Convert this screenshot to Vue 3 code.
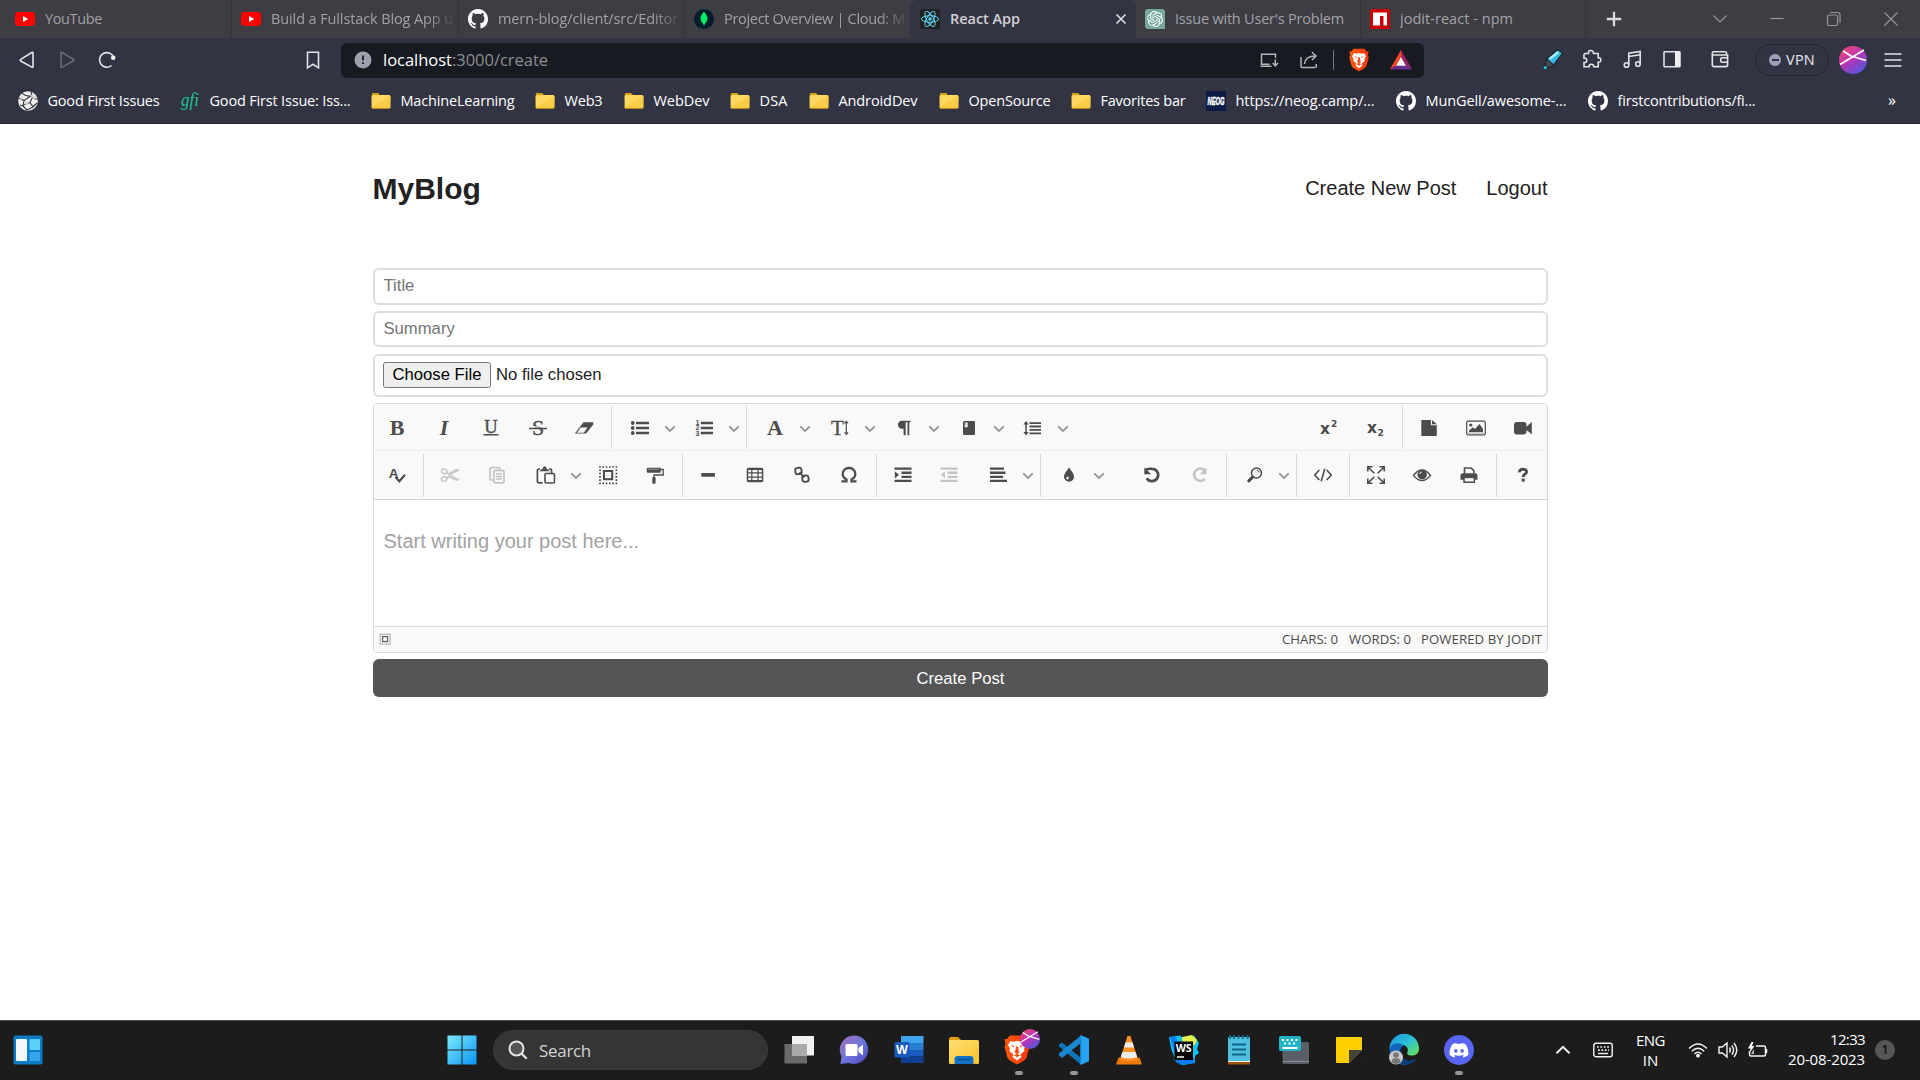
<script setup>
// Spreads a label's letters so that it fills the given width in pixels.
const vFit = {
  mounted(el, { value }) {
    if (!value) return
    const count = el.textContent.length
    const spacing = (value - el.getBoundingClientRect().width) / count
    el.style.letterSpacing = spacing.toFixed(3) + 'px'
  }
}

const githubPath = 'M8 0C3.58 0 0 3.58 0 8c0 3.54 2.29 6.53 5.47 7.59.4.07.55-.17.55-.38 0-.19-.01-.82-.01-1.49-2.01.37-2.53-.49-2.69-.94-.09-.23-.48-.94-.82-1.13-.28-.15-.68-.52-.01-.53.63-.01 1.08.58 1.23.82.72 1.21 1.87.87 2.33.66.07-.52.28-.87.51-1.07-1.78-.2-3.64-.89-3.64-3.95 0-.87.31-1.59.82-2.15-.08-.2-.36-1.02.08-2.12 0 0 .67-.21 2.2.82.64-.18 1.32-.27 2-.27s1.36.09 2 .27c1.53-1.04 2.2-.82 2.2-.82.44 1.1.16 1.92.08 2.12.51.56.82 1.27.82 2.15 0 3.07-1.87 3.75-3.65 3.95.29.25.54.73.54 1.48 0 1.07-.01 1.93-.01 2.2 0 .21.15.46.55.38A8.01 8.01 0 0 0 16 8c0-4.42-3.58-8-8-8Z'
const openaiPath = 'M22.2819 9.8211a5.9847 5.9847 0 0 0-.5157-4.9108 6.0462 6.0462 0 0 0-6.5098-2.9A6.0651 6.0651 0 0 0 4.9807 4.1818a5.9847 5.9847 0 0 0-3.9977 2.9 6.0462 6.0462 0 0 0 .7427 7.0966 5.98 5.98 0 0 0 .511 4.9107 6.051 6.051 0 0 0 6.5146 2.9001A5.9847 5.9847 0 0 0 13.2599 24a6.0557 6.0557 0 0 0 5.7718-4.2058 5.9894 5.9894 0 0 0 3.9977-2.9001 6.0557 6.0557 0 0 0-.7475-7.0729zm-9.022 12.6081a4.4755 4.4755 0 0 1-2.8764-1.0408l.1419-.0804 4.7783-2.7582a.7948.7948 0 0 0 .3927-.6813v-6.7369l2.02 1.1686a.071.071 0 0 1 .038.052v5.5826a4.504 4.504 0 0 1-4.4945 4.4944zm-9.6607-4.1254a4.4708 4.4708 0 0 1-.5346-3.0137l.142.0852 4.783 2.7582a.7712.7712 0 0 0 .7806 0l5.8428-3.3685v2.3324a.0804.0804 0 0 1-.0332.0615L9.74 19.9502a4.4992 4.4992 0 0 1-6.1408-1.6464zM2.3408 7.8956a4.485 4.485 0 0 1 2.3655-1.9728V11.6a.7664.7664 0 0 0 .3879.6765l5.8144 3.3543-2.0201 1.1685a.0757.0757 0 0 1-.071 0l-4.8303-2.7865A4.504 4.504 0 0 1 2.3408 7.872zm16.5963 3.8558L13.1038 8.364 15.1192 7.2a.0757.0757 0 0 1 .071 0l4.8303 2.7913a4.4944 4.4944 0 0 1-.6765 8.1042v-5.6772a.79.79 0 0 0-.407-.667zm2.0107-3.0231l-.142-.0852-4.7735-2.7818a.7759.7759 0 0 0-.7854 0L9.409 9.2297V6.8974a.0662.0662 0 0 1 .0284-.0615l4.8303-2.7866a4.4992 4.4992 0 0 1 6.6802 4.66zM8.3065 12.863l-2.02-1.1638a.0804.0804 0 0 1-.038-.0567V6.0742a4.4992 4.4992 0 0 1 7.3757-3.4537l-.142.0805L8.704 5.459a.7948.7948 0 0 0-.3927.6813zm1.0976-2.3654l2.602-1.4998 2.6069 1.4998v2.9994l-2.5974 1.4997-2.6067-1.4997Z'
const discordPath = 'M20.317 4.3698a19.7913 19.7913 0 00-4.8851-1.5152.0741.0741 0 00-.0785.0371c-.211.3753-.4447.8648-.6083 1.2495-1.8447-.2762-3.68-.2762-5.4868 0-.1636-.3933-.4058-.8742-.6177-1.2495a.077.077 0 00-.0785-.037 19.7363 19.7363 0 00-4.8852 1.515.0699.0699 0 00-.0321.0277C.5334 9.0458-.319 13.5799.0992 18.0578a.0824.0824 0 00.0312.0561c2.0528 1.5076 4.0413 2.4228 5.9929 3.0294a.0777.0777 0 00.0842-.0276c.4616-.6304.8731-1.2952 1.226-1.9942a.076.076 0 00-.0416-.1057c-.6528-.2476-1.2743-.5495-1.8722-.8923a.077.077 0 01-.0076-.1277c.1258-.0943.2517-.1923.3718-.2914a.0743.0743 0 01.0776-.0105c3.9278 1.7933 8.18 1.7933 12.0614 0a.0739.0739 0 01.0785.0095c.1202.099.246.1981.3728.2924a.077.077 0 01-.0066.1276 12.2986 12.2986 0 01-1.873.8914.0766.0766 0 00-.0407.1067c.3604.698.7719 1.3628 1.225 1.9932a.076.076 0 00.0842.0286c1.961-.6067 3.9495-1.5219 6.0023-3.0294a.077.077 0 00.0313-.0552c.5004-5.177-.8382-9.6739-3.5485-13.6604a.061.061 0 00-.0312-.0286zM8.02 15.3312c-1.1825 0-2.1569-1.0857-2.1569-2.419 0-1.3332.9555-2.4189 2.157-2.4189 1.2108 0 2.1757 1.0952 2.1568 2.419 0 1.3332-.9555 2.4189-2.1569 2.4189zm7.9748 0c-1.1825 0-2.1569-1.0857-2.1569-2.419 0-1.3332.9554-2.4189 2.1569-2.4189 1.2108 0 2.1757 1.0952 2.1568 2.419 0 1.3332-.946 2.4189-2.1568 2.4189Z'

// 20 x 20 site icons for tabs and bookmarks
const site = {
  youtube: '<rect x="0" y="3" width="20" height="14" rx="3.4" fill="#f00"/><path d="M8 7l5.2 3L8 13z" fill="#fff"/>',
  github: `<path transform="scale(1.25)" d="${githubPath}" fill="#fff"/>`,
  mongo: '<circle cx="10" cy="10" r="10" fill="#001e2b"/><path d="M10 2.6c.4 1 3.4 3.2 3.4 7 0 3-1.800 4.600-2.900 5.500l-.2 2h-.6l-.2-2c-1.100-.9-2.900-2.500-2.900-5.500 0-3.800 3-6 3.400-7z" fill="#00ed64"/>',
  react: '<rect width="20" height="20" rx="2" fill="#212121"/><g fill="none" stroke="#61dafb" stroke-width=".95"><ellipse cx="10" cy="10" rx="8.600" ry="3.300"/><ellipse cx="10" cy="10" rx="8.600" ry="3.300" transform="rotate(60 10 10)"/><ellipse cx="10" cy="10" rx="8.600" ry="3.300" transform="rotate(120 10 10)"/></g><circle cx="10" cy="10" r="1.700" fill="#61dafb"/>',
  openai: `<path d="M3 0h14a3 3 0 0 1 3 3v17H3a3 3 0 0 1-3-3V3a3 3 0 0 1 3-3z" fill="#75a99c"/><g transform="translate(2 2) scale(.667)"><path d="${openaiPath}" fill="#fff"/></g>`,
  npm: '<rect width="20" height="20" fill="#c00"/><path d="M3 3.500h14v13h-3.500V7H10v9.500H3z" fill="#fff"/>',
  ball: '<circle cx="10" cy="10" r="9.800" fill="#f2f2f2"/><g fill="none" stroke="#3b3b3b" stroke-width="1.200"><path d="M4 2.500c3 2 6 3 9 2.500M1 7l5 2.500 6-4M6 9.500L5 15l-3-1M5 15l4 4M5.500 14l6.500-2.500 2.500-5 4.500 2M12 11.500l3.500 5M9 19l6-3 4-4M13 .8l1.500 5.500"/></g><path d="M13 4l2 4 4-1-3-4zM3 4l3 2-4 4zM6 11l4-1 1 2-4 2z" fill="#d9d9d9"/>',
  gfi: '<text x="10" y="14.500" text-anchor="middle" textLength="18" lengthAdjust="spacingAndGlyphs" font-family="Liberation Serif, serif" font-style="italic" font-size="18.500" fill="#22c197">gfi</text>',
  folder: '<path d="M.8 3.500q0-1.400 1.300-1.400h5l2 2.200h9q1.300 0 1.300 1.400v4H.8z" fill="#dfa00e"/><rect x=".6" y="4" width="18.800" height="13.600" rx="1.500" fill="#ffd95f"/><path d="M19.400 5v11.100q0 1.500-1.500 1.500H2.100q-1.500 0-1.500-1.500z" fill="#f9c73f" opacity=".75"/><path d="M.9 17.400h18" stroke="#b98a1b" stroke-width="1"/>',
  neog: '<rect width="20" height="20" fill="#0b1c44"/><text x="10" y="13.600" text-anchor="middle" textLength="17" lengthAdjust="spacingAndGlyphs" font-family="Liberation Sans, sans-serif" font-weight="bold" font-style="italic" font-size="10" fill="#fff" stroke="#fff" stroke-width=".5">NEOG</text>'
}

const tabs = [
  { icon: 'youtube', text: 'YouTube', fit: 57, w: 232, pad: 15 },
  { icon: 'youtube', text: 'Build a Fullstack Blog App u', fit: 182, w: 227, pad: 9, fade: true },
  { icon: 'github', text: 'mern-blog/client/src/Editor', fit: 180, w: 226, pad: 9, fade: true },
  { icon: 'mongo', text: 'Project Overview | Cloud: M', fit: 181, w: 225, pad: 9, fade: true },
  { icon: 'react', text: 'React App', fit: 70, w: 226, pad: 10, active: true },
  { icon: 'openai', text: "Issue with User's Problem", fit: 169, w: 225, pad: 9 },
  { icon: 'npm', text: 'jodit-react - npm', fit: 113, w: 225, pad: 9 }
]

const bookmarks = [
  { icon: 'ball', text: 'Good First Issues', fit: 112, w: 162 },
  { icon: 'gfi', text: 'Good First Issue: Iss...', fit: 141, w: 191 },
  { icon: 'folder', text: 'MachineLearning', fit: 114, w: 164 },
  { icon: 'folder', text: 'Web3', fit: 38, w: 89 },
  { icon: 'folder', text: 'WebDev', fit: 56, w: 106 },
  { icon: 'folder', text: 'DSA', fit: 28, w: 79 },
  { icon: 'folder', text: 'AndroidDev', fit: 79, w: 130 },
  { icon: 'folder', text: 'OpenSource', fit: 82, w: 132 },
  { icon: 'folder', text: 'Favorites bar', fit: 85, w: 135 },
  { icon: 'neog', text: 'https://neog.camp/...', fit: 139, w: 190 },
  { icon: 'github', text: 'MunGell/awesome-...', fit: 141, w: 192 },
  { icon: 'github', text: 'firstcontributions/fi...', fit: 138, w: 170 }
]

const serif = 'text-anchor="middle" font-family="Liberation Serif, serif" fill="currentColor"'
// 20 x 20 editor toolbar icons
const ed = {
  bold: `<text x="10" y="17.200" font-size="22" font-weight="bold" ${serif}>B</text>`,
  italic: `<text x="10" y="17.200" font-size="22" font-weight="bold" font-style="italic" ${serif}>I</text>`,
  underline: `<text x="10" y="14.600" font-size="18.500" stroke="currentColor" stroke-width=".4" ${serif}>U</text><path d="M2.500 16.700h15" stroke="currentColor" stroke-width="1.400"/>`,
  strike: `<text x="10" y="17.200" font-size="22" stroke="currentColor" stroke-width=".4" ${serif}>S</text><path d="M1 8.800h18" stroke="#f9f9f9" stroke-width="1.200"/><path d="M1 10.400h18" stroke="currentColor" stroke-width="1.500"/>`,
  eraser: '<path d="M.8 15.500L9.500 4.200h9.700v2.300l-7 9H.8z" fill="currentColor"/><path d="M2.800 14.800L6.800 9.500h6.700l-3.700 5.300z" fill="#f9f9f9"/>',
  ul: '<g fill="currentColor"><circle cx="2.700" cy="5" r="1.900"/><circle cx="2.700" cy="10" r="1.900"/><circle cx="2.700" cy="15" r="1.900"/><path d="M6 3.800h13v2.500H6zM6 8.800h13v2.500H6zM6 13.800h13v2.500H6z"/></g>',
  ol: '<path fill="currentColor" d="M6.800 3.800H19v2.500H6.800zM6.800 8.800H19v2.500H6.800zM6.800 13.800H19v2.500H6.800z"/><g font-family="Liberation Sans, sans-serif" font-weight="bold" font-size="7" fill="currentColor"><text x="1.500" y="6.500">1</text><text x="1.500" y="12.300">2</text><text x="1.500" y="18.300">3</text></g>',
  font: `<text x="10" y="17.200" font-size="22" font-weight="bold" ${serif}>A</text>`,
  size: `<text x="7.500" y="17" font-size="21" stroke="currentColor" stroke-width=".3" ${serif}>T</text><path d="M16.300 4v11M14.500 5.300l1.800-2 1.800 2M14.500 14.300l1.800 2 1.800-2" fill="none" stroke="currentColor" stroke-width="1.200"/>`,
  para: '<path fill="currentColor" d="M7.800 2.800h8.700v1.500h-1.200v12.900h-1.800V4.300h-1.800v12.900H9.600v-6.400H8.200C5.600 10.800 4 9 4 6.800s1.600-4 3.800-4z"/>',
  book: '<path fill="currentColor" d="M6 3h9a1 1 0 0 1 1 1v12a1 1 0 0 1-1 1H5.500A1.500 1.500 0 0 1 4 15.500V4.500C4 3.500 5 3 6 3z"/><path d="M5.700 4.600h3v4.600h-3z" fill="#eee"/><path d="M6.200 6h1" stroke="currentColor" stroke-width=".8"/>',
  line: '<path fill="currentColor" d="M6.500 4.200H18v1.800H6.500zM6.500 7.600H18v1.800H6.500zM6.500 11H18v1.800H6.500zM6.500 14.400H18v1.800H6.500zM2.300 5.500h1.500v9.500H2.300zM3 3l2.700 3.400H.4zM3 17.400L.4 14h5.300z"/>',
  sup: '<text x="1" y="15.800" font-family="DejaVu Sans, sans-serif" font-size="15" font-weight="bold" fill="currentColor" textLength="10" lengthAdjust="spacingAndGlyphs">x</text><text x="12" y="9" font-family="DejaVu Sans, sans-serif" font-size="9" font-weight="bold" fill="currentColor">2</text>',
  sub: '<text x="1" y="15" font-family="DejaVu Sans, sans-serif" font-size="15" font-weight="bold" fill="currentColor" textLength="10" lengthAdjust="spacingAndGlyphs">x</text><text x="11.500" y="17.800" font-family="DejaVu Sans, sans-serif" font-size="9" font-weight="bold" fill="currentColor">2</text>',
  file: '<path fill="currentColor" d="M2.300 2h9.600v5.300h5.900V18H2.300zM13 2l4.800 4.200H13z"/>',
  image: '<rect x=".7" y="3.200" width="18.600" height="13.600" rx="1.300" fill="#f9f9f9" stroke="currentColor" stroke-width="1.200"/><circle cx="4.800" cy="7" r="1.600" fill="currentColor"/><path fill="currentColor" d="M3 14v-1.500l4-3.200 2 1.800 4.500-5 3.500 5V14z"/><path d="M2 15h16" stroke="#aaa"/>',
  video: '<rect x="1" y="4" width="12.500" height="12.400" rx="3" fill="currentColor"/><path fill="currentColor" d="M12.500 9.500L18.800 4v12.200l-6.300-5z"/>',
  spell: '<text x="6.500" y="13" text-anchor="middle" font-family="Liberation Sans, sans-serif" font-size="13.500" font-weight="bold" fill="currentColor">A</text><path d="M8.500 12l3.800 4.300 5.700-6.500" fill="none" stroke="currentColor" stroke-width="2.100"/>',
  cut: '<g fill="none" stroke="currentColor" stroke-width="1.400"><ellipse cx="4.200" cy="6.200" rx="2.800" ry="2.300" transform="rotate(20 4.200 6.200)"/><ellipse cx="4.200" cy="14" rx="2.800" ry="2.300" transform="rotate(-20 4.200 14)"/><path d="M6.500 7.500L9.500 10l8.800 4.500-1.800.8L9 11.800 6.500 13M9.500 10l8.800-4.800-1.800-.6L9 8.500"/></g>',
  copy: '<g fill="#f9f9f9" stroke="currentColor" stroke-width="1.700"><rect x="3" y="2.500" width="10" height="12.500" rx="1.800"/><rect x="7" y="5.300" width="10" height="12.500" rx="1.800"/></g><path d="M9 9h6M9 11.500h6M9 14h6" stroke="currentColor" stroke-width="1.600"/>',
  paste: '<path d="M6.500 17.800H3a1.600 1.600 0 0 1-1.600-1.600V5.600A1.600 1.600 0 0 1 3 4h1M13 4h1a1.600 1.600 0 0 1 1.600 1.600V8" fill="none" stroke="currentColor" stroke-width="1.700"/><path fill="currentColor" d="M3.500 6.300Q4 4.500 6.600 3.800 6.800 1.200 8.600 1.200t2 2.600q2.500.7 3 2.500z"/><rect x="9" y="8.500" width="9.500" height="9.500" rx="1.300" fill="#f9f9f9" stroke="currentColor" stroke-width="1.600"/>',
  select: '<rect x="2" y="2" width="16.400" height="16.400" fill="none" stroke="currentColor" stroke-width="1.700" stroke-dasharray="1.640 1.640" stroke-dashoffset=".8"/><rect x="6" y="6" width="8.200" height="8.200" fill="none" stroke="currentColor" stroke-width="2"/>',
  brush: '<rect x="1.800" y="2.700" width="14" height="5" rx=".8" fill="currentColor"/><path d="M3 4.300h11" stroke="#aaa" stroke-width=".8"/><path d="M15.500 4.500h2.700V10H9v2.500" fill="none" stroke="currentColor" stroke-width="1.300"/><rect x="7.300" y="12" width="3.300" height="6.800" rx="1" fill="currentColor"/>',
  hr: '<rect x="3.300" y="8" width="13.600" height="3.800" rx=".5" fill="currentColor"/>',
  table: '<path fill="currentColor" fill-rule="evenodd" d="M3.500 2.700h13a1.800 1.800 0 0 1 1.800 1.800v11a1.800 1.800 0 0 1-1.800 1.800h-13a1.800 1.800 0 0 1-1.800-1.800v-11a1.800 1.800 0 0 1 1.800-1.800zM3.200 5v2.300h3V5zm4.200 0v2.300h5V5zm6.200 0v2.300h3.200V5zM3.200 8.600v2.800h3V8.600zm4.200 0v2.800h5V8.600zm6.200 0v2.800h3.200V8.600zM3.200 12.700V15h3v-2.300zm4.200 0V15h5v-2.300zm6.200 0V15h3.200v-2.300z"/>',
  link: '<g fill="none" stroke="currentColor" stroke-width="1.900"><rect x="3.300" y="2.800" width="6.300" height="6.300" rx="2.500" transform="rotate(-8 6.400 6)"/><rect x="10.300" y="10.500" width="6.300" height="6.300" rx="2.500" transform="rotate(-8 13.400 13.600)"/><path d="M7.500 7.300l5 5"/></g>',
  omega: '<path d="M2.500 16.300h5v-1.800C5 13.300 3.700 11.500 3.700 9A6 6 0 0 1 10 3a6 6 0 0 1 6.300 6c0 2.500-1.300 4.300-3.800 5.500v1.800h5" fill="none" stroke="currentColor" stroke-width="2.300"/>',
  indent: '<path fill="currentColor" d="M1.500 2.500h17v2.300h-17zM8.500 6.600h10v2.300h-10zM8.500 10.700h10V13h-10zM1.500 14.800h17v2.300h-17zM1.800 6.200L6 9.800l-4.200 3.600z"/>',
  outdent: '<path fill="currentColor" d="M1.500 2.500h17v2.300h-17zM8.500 6.600h10v2.300h-10zM8.500 10.700h10V13h-10zM1.500 14.800h17v2.300h-17zM6 6.200L1.800 9.800 6 13.400z"/>',
  align: '<path fill="currentColor" d="M2 2.500h14v2.300H2zM2 6.600h15.500v2.300H2zM2 10.700h13V13H2zM2 14.800h17v2.300H2z"/>',
  drop: '<path fill="currentColor" d="M10 2c.6 2.600 5 5.700 5 9.800a5 5 0 0 1-10 0C5 7.700 9.400 4.600 10 2z"/><path d="M9.300 11.300c.3 1 .5 1.500.4 2.300a1.300 1.300 0 0 1-2.500-.2c0-.8.900-1.200 2.100-2.100z" fill="#fff"/>',
  undo: '<path d="M4.200 4.500Q6.500 3.500 10 3.800a6.200 6.200 0 1 1-5.300 9.500" fill="none" stroke="currentColor" stroke-width="2.700"/><path fill="currentColor" d="M2.300 2.500v6.700h6.900z"/>',
  redo: '<path d="M15.800 5.500A6.200 6.200 0 1 0 15.800 14" fill="none" stroke="currentColor" stroke-width="2.600"/><path fill="currentColor" d="M17.500 2.500v6.700h-6.700z"/>',
  search: '<circle cx="11.500" cy="8" r="5" fill="none" stroke="currentColor" stroke-width="1.500"/><path d="M11.800 5.300a2.500 2.500 0 0 1 2.300 2.300" fill="none" stroke="currentColor"/><path d="M7.700 12L3.800 15.900" stroke="currentColor" stroke-width="3" stroke-linecap="round"/>',
  source: '<path d="M6.300 5L1.800 10l4.500 5M13.700 5l4.500 5-4.500 5M11.800 3.800L8.200 16.200" fill="none" stroke="currentColor" stroke-width="1.600"/>',
  full: '<path d="M1.800 6.500V1.800h4.700M13.500 1.800h4.700v4.700M18.200 13.500v4.700h-4.700M6.500 18.200H1.800v-4.700M2 2l6.300 6.300M18 2l-6.300 6.300M18 18l-6.300-6.300M2 18l6.300-6.300" fill="none" stroke="currentColor" stroke-width="1.600"/>',
  eye: '<path d="M1.500 10.400Q5.500 5 10 5t8.500 5.400Q14.500 15.600 10 15.600T1.500 10.400z" fill="#f9f9f9" stroke="currentColor" stroke-width="1.400"/><circle cx="10.200" cy="9.800" r="4.700" fill="currentColor"/><path d="M7.800 9a2.200 2.200 0 0 1 2-2" stroke="#f9f9f9" stroke-width="1" fill="none"/>',
  print: '<path d="M5.500 8.500V3h6.500l2.800 2.700v2.800" fill="#f9f9f9" stroke="currentColor" stroke-width="1.600"/><path fill="currentColor" d="M3.800 8.200h12.400a2.300 2.300 0 0 1 2.300 2.300v4.300H1.500v-4.300a2.300 2.300 0 0 1 2.300-2.300z"/><rect x="5" y="12.400" width="10.300" height="4.800" fill="#f9f9f9" stroke="currentColor" stroke-width="1.500"/>',
  help: '<path d="M6.500 7.300Q6.300 4.300 10 4.300t3.500 2.600c0 2.300-3.300 2.200-3.300 5" fill="none" stroke="currentColor" stroke-width="2.900"/><rect x="8.600" y="13.600" width="3.200" height="3" fill="currentColor"/>',
  chev: '<path d="M5.200 8.300l4.800 4.700 4.800-4.700" fill="none" stroke="#959595" stroke-width="1.800"/>'
}

const b = (icon, w = 47, off = false) => ({ icon, w, off })
const c = (w = 14) => ({ icon: 'chev', w })
const s = (w = 7) => ({ sep: true, w })
const g = (w) => ({ w })

const rows = [
  [b('bold', 46), b('italic'), b('underline'), b('strike'), b('eraser', 46), s(8), g(1), b('ul'), c(), g(4), b('ol', 46), c(), s(11),
    b('font', 46), c(), g(5), b('size', 46), c(13), g(5), b('para', 46), c(), g(5), b('book', 46), c(13), g(5), b('line', 46), c(),
    g(236), b('sup', 46), b('sub'), s(), b('file', 46), b('image'), b('video', 48)],
  [b('spell', 46), s(), b('cut', 46, true), b('copy', 48, true), g(2), b('paste', 46), c(), g(2), b('select', 46), b('brush', 48), s(),
    b('hr', 45), b('table', 48), b('link'), b('omega'), s(), b('indent', 46), b('outdent', 47, true), g(2), b('align', 46), c(), s(11),
    b('drop', 46), c(), g(23), b('undo'), b('redo', 47, true), s(), g(2), b('search', 46), c(13), s(11), b('source', 43), s(9),
    b('full', 45), b('eye'), b('print'), s(), b('help')]
]

const lion = '<path d="M8 1h14l3 3.500 2.500 0-1 5 1 3-3 11Q23 26 15 30 7 26 5.500 23.500l-3-11 1-3-1-5L5 4.500z" fill="url(#lion)"/><path d="M8.500 6.500l3 .8L15 6.300l3.500 1 3-.8 2.500 4-2 3.500.5 2.500-4 3.500 1 2.500L15 26l-4.500-3.500 1-2.500-4-3.500L8 14l-2-3.500z" fill="#fff"/><path d="M8.300 10.500l4 1-.5 1.500zM21.700 10.500l-4 1 .5 1.500zM14 12h2l.8 5H18l-3 3-3-3h1.200zM11 21l4-1.500 4 1.500-2.500.6-1.500 1.500-1.500-1.500z" fill="#fb4a12"/>'
const orb = '<circle cx="14" cy="14" r="14" fill="url(#orb)"/><path d="M1 18.500L25 4M4 5l8 5 15 4.500" stroke="#fff" stroke-width="1.600" fill="none"/>'

// 32 x 32 pinned application icons
const apps = [
  { svg: '<path d="M1.500 10H24v19.500H1.500z" fill="#6a6a6a"/><path d="M9 2h22v19.500H9z" fill="#f1f1f1"/><path d="M9 10h15v11.500H9z" fill="#a9a9a9"/>' },
  { svg: '<path d="M16 1.500a14.200 14.200 0 1 1-5 27.500l-8.500 1 1-7.500A14.200 14.200 0 0 1 16 1.500z" fill="url(#chat)"/><rect x="7.500" y="10" width="12" height="12" rx="1.500" fill="#fff"/><path d="M20.500 14l4.500-3.500v11L20.500 18z" fill="#fff"/>' },
  { svg: '<path d="M8 2h22.500v7H8z" fill="#41a5ee"/><path d="M8 9h22.500v7H8z" fill="#2b7cd3"/><path d="M8 16h22.500v6.500H8z" fill="#185abd"/><path d="M8 22.500h22.500V29H8z" fill="#103f91"/><rect x="1.500" y="8" width="15" height="15.500" rx="1.500" fill="#185abd"/><text x="9" y="20" text-anchor="middle" font-family="Liberation Sans, sans-serif" font-weight="bold" font-size="12.500" fill="#fff">W</text>' },
  { svg: '<path d="M1 5q0-2 2-2h7l4 4v5H1z" fill="#e09c0a"/><rect x="1" y="6" width="30" height="24" rx="1.500" fill="url(#fold)"/><path d="M6.500 30v-5q0-3 3-3h13q3 0 3 3v5z" fill="#1372c4"/><path d="M10 25.500h12" stroke="#0a4c8c" stroke-width="1.500"/>' },
  { svg: `<g transform="translate(-1 .5) scale(1)">${lion}</g>`, badge: true, run: true },
  { svg: '<path d="M1 10.500L4 8.500l19.500 15.700V31L1 12.500z" fill="#0f74ba"/><path d="M1 21.500l3 2.500L23.500 8.500V1L1 19.500z" fill="#1c86cf"/><path d="M22.500 1L31 4.800v22.400L22.500 31z" fill="#26a3f1"/><path d="M22.500 1q-1 15 0 30l1-6.500V8z" fill="#1783cd"/>', run: true },
  { svg: '<path d="M5.500 23.500h21L29 30.500H3z" fill="#ee7a0a"/><path d="M14.500 2h3L25 25.500Q16 29 7 25.500z" fill="#fa9122"/><path d="M12.500 8.500h7l1.600 5h-10.200zM9.500 18h13l1.700 5q-8.200 3-16.400 0z" fill="#ececec"/>' },
  { svg: '<path d="M1 3l11-1.500L16 5l10-3.500L31 9l-2 6 2 4-4 3 0 7-12 2-7-3-5-14z" fill="#07c3f2"/><path d="M14 3l10-2 5 5-2 5H14z" fill="#e5f04c"/><path d="M2 3l7 0-2 17zM5 25l8 6 13-2 1-5z" fill="#087cfa"/><rect x="6.500" y="7.500" width="18.500" height="18.500" fill="#000"/><text x="15.700" y="17.500" text-anchor="middle" font-family="Open Sans, sans-serif" font-weight="bold" font-size="10.500" fill="#fff">WS</text><path d="M9 23h7" stroke="#fff" stroke-width="1.500"/>' },
  { svg: '<path d="M5 27h22v3.500H5z" fill="#a1530f"/><path d="M5 26h22v2H5z" fill="#eee"/><rect x="5" y="3" width="22" height="24" rx="1" fill="#50bfe0"/><path d="M9 10.500h14M9 15.500h14M9 20.500h14" stroke="#0b6688" stroke-width="2"/><path d="M7 1v4M11 1v4M15.500 1v4M20 1v4M24.500 1v4" stroke="#0b6e91" stroke-width="1.700"/>' },
  { svg: '<rect x="4.500" y="8" width="26.500" height="22" rx="1.500" fill="#5a5e66"/><path d="M5 27.500h26" stroke="#8c9096"/><rect x="1" y="2" width="22" height="15" rx="1.500" fill="#20b3c6"/><path d="M4 6h16M6 9.500h12" stroke="#fff" stroke-width="2" stroke-dasharray="2 2.500"/><path d="M4.500 14h15" stroke="#fff" stroke-width="2"/>' },
  { svg: '<rect x="3" y="3" width="26" height="26" rx="1" fill="#ffd000"/><path d="M16 29V16h13z" fill="#45423a"/><path d="M16 29h12q1 0 1-1V16z" fill="#1c1c1c"/>' },
  { svg: '<path d="M1.500 15A14.700 14.700 0 0 1 31 14c.3 5-3 7.500-7 7.500-4 0-5.500-1.500-4.500-3.500 2-5-4-9-10-6.500C5.500 13 4 17 5 21z" fill="url(#edge)"/><path d="M1.500 15C3 9 12 7 16 12c-4 1-6 7-2 12 4 4 10 3.500 14 .5A14.600 14.600 0 0 1 1.500 15z" fill="#1464ba"/><path d="M14 15c-3 5 1 12 8 12 3 0 5-1 6.500-2-4 6-11 7-16 4C8 26 9 17 14 15z" fill="#0b3b7a"/><circle cx="8" cy="23.500" r="7" fill="#c9c9c9"/><circle cx="8" cy="21" r="2.800" fill="#777"/><path d="M3.500 28q0-4 4.500-4t4.500 4q-4.500 4-9 0z" fill="#777"/>' },
  { svg: `<circle cx="16" cy="16" r="15" fill="#5865f2"/><g transform="translate(6.500 6.700) scale(.79)"><path d="${discordPath}" fill="#fff"/></g>`, run: true }
]
</script>

<template>
  <div class="desktop">
    <svg class="defs" width="0" height="0" aria-hidden="true">
      <defs>
        <linearGradient id="lion" x1="0" x2="1"><stop offset="0" stop-color="#ff5a0a" /><stop offset="1" stop-color="#f8350e" /></linearGradient>
        <linearGradient id="orb" x1="0.1" y1="0" x2="0.8" y2="1"><stop offset="0" stop-color="#f54a6a" /><stop offset=".5" stop-color="#b535b8" /><stop offset="1" stop-color="#4b5be2" /></linearGradient>
        <linearGradient id="chat" x1="0" y1="0" x2="1" y2="1"><stop offset="0" stop-color="#a06bb5" /><stop offset=".5" stop-color="#6f78da" /><stop offset="1" stop-color="#4a45c4" /></linearGradient>
        <linearGradient id="fold" x1="0" y1="0" x2="1" y2="1"><stop offset="0" stop-color="#ffe073" /><stop offset="1" stop-color="#fbc22c" /></linearGradient>
        <linearGradient id="edge" x1="0" y1="0" x2="1" y2="1"><stop offset="0" stop-color="#1a8fe0" /><stop offset=".5" stop-color="#2cc1d8" /><stop offset="1" stop-color="#6fe24a" /></linearGradient>
        <linearGradient id="win" x1="0" y1="0" x2="1" y2="1"><stop offset="0" stop-color="#7ceaff" /><stop offset="1" stop-color="#0a93f5" /></linearGradient>
      </defs>
    </svg>

    <header class="browser">
      <div class="tabs">
        <div v-for="(t, i) in tabs" :key="i" class="tab" :class="{ active: t.active }" :style="{ width: t.w + 'px', paddingLeft: t.pad + 'px' }">
          <svg width="20" height="20" viewBox="0 0 20 20" v-html="site[t.icon]" />
          <span class="tab-text" :class="{ fade: t.fade }"><span v-fit="t.fit" class="fit">{{ t.text }}</span></span>
          <svg v-if="t.active" class="tab-close" width="12" height="12" viewBox="0 0 12 12"><path d="M1.500 1.500l9 9M10.500 1.500l-9 9" stroke="#dcdce0" stroke-width="1.700" /></svg>
        </div>
        <svg class="new-tab" width="16" height="16" viewBox="0 0 16 16"><path d="M8 .8v14.400M.8 8h14.400" stroke="#dadadd" stroke-width="2.300" /></svg>
        <div class="win-buttons">
          <svg width="16" height="16" viewBox="0 0 16 16"><path d="M1.500 4.500L8 11l6.500-6.500" /></svg>
          <svg width="16" height="16" viewBox="0 0 16 16"><path d="M1.500 7.500h13" /></svg>
          <svg width="16" height="16" viewBox="0 0 16 16"><rect x="1.500" y="4" width="10" height="10.500" rx="1.500" /><path d="M4 1.500h7.500q2.500 0 2.500 2.500v8" /></svg>
          <svg width="16" height="16" viewBox="0 0 16 16"><path d="M1.500 1.500l13 13M14.500 1.500l-13 13" /></svg>
        </div>
      </div>

      <div class="toolbar">
        <div class="nav-icons">
          <span><svg width="20" height="20" viewBox="0 0 20 20"><path d="M16 3v13.500q0 1.300-1.200.6L3.700 11q-1-.9 0-1.700L14.800 2.500Q16 1.800 16 3z" /></svg></span>
          <span class="dim"><svg width="20" height="20" viewBox="0 0 20 20"><path d="M4 3v13.500q0 1.300 1.200.6L16.300 11q1-.9 0-1.700L5.200 2.500Q4 1.800 4 3z" /></svg></span>
          <span><svg width="20" height="20" viewBox="0 0 20 20"><path d="M14.500 15.500A7.300 7.300 0 1 1 16.500 7" /><circle cx="16.200" cy="7.800" r="2.300" fill="#eee" stroke="none" /></svg></span>
        </div>
        <svg class="bookmark" width="20" height="20" viewBox="0 0 20 20"><path d="M4.500 2.300h11v15.500l-5.500-3.500-5.500 3.500z" /></svg>
        <div class="address">
          <svg class="info" width="18" height="18" viewBox="0 0 18 18"><circle cx="9" cy="9" r="8.500" fill="#9ea1ad" stroke="none" /><path d="M9 4.500v5M9 11.300v1.800" stroke="#181a21" stroke-width="1.800" /></svg>
          <span v-fit="69" class="fit host">localhost</span><span v-fit="96" class="fit path">:3000/create</span>
          <svg class="device" width="20" height="20" viewBox="0 0 20 20"><path d="M16.500 8V4.200H2.500v10h8M1.500 16.300h11M16.300 9.500v6M13.700 13l2.600 2.800L19 13" /></svg>
          <svg class="share" width="20" height="20" viewBox="0 0 20 20"><path d="M2 7v9.500q0 1 1 1h13.500M5.500 14q.5-8 11-8M13 2.300l4 3.700-4 4M17.300 14v3.500" /></svg>
          <i class="divider"></i>
          <svg class="shield" width="22" height="24" viewBox="2 0 26 31" v-html="lion" />
          <svg class="bat" width="24" height="20" viewBox="0 0 24 20"><path d="M12 0L.8 19.500 7 15.500 12 7z" fill="#ff4724" stroke="none" /><path d="M12 0l11.200 19.500L17 15.500 12 7z" fill="#9e1f63" stroke="none" /><path d="M.8 19.500h22.400L17 15.500H7z" fill="#662d91" stroke="none" /><path d="M12 7l5 8.800H7z" fill="#fff" stroke="none" /></svg>
        </div>
        <div class="ext-icons">
          <span><svg width="22" height="22" viewBox="0 0 22 22"><path d="M16 1.500q1-.8 2 0l2.300 2q.9.900.1 2L12.500 16l-7-6z" fill="#33b8df" stroke="#111" stroke-width="1" /><path d="M5.500 9.500l7.300 6.500-3 2-3.300.3-2.300-2.200z" fill="#454b52" stroke="#111" stroke-width=".8" /><path d="M4 16l2.700 2.500L5 20.500H1.500z" fill="#35bedd" stroke="#111" stroke-width=".6" /><path d="M8.800 10l8.400-7" stroke="#a8e9f7" stroke-width="2.400" /></svg></span>
          <span><svg width="20" height="20" viewBox="0 0 20 20"><path d="M3 4.500h3.500Q6 1.500 8.800 1.500T11.500 4.500h4.700v4.200q2.600-.4 2.600 2.200t-2.600 2.300v4.500h-4.500q.2-2.400-2.300-2.400t-2.300 2.400H2v-4.200q2.800.2 2.800-2.200T2 9.200V5.500z" /></svg></span>
          <span><svg width="20" height="20" viewBox="0 0 20 20"><path d="M6.800 15.500V4.300L18.200 2.500v12.300M6.800 7.500l11.400-1.800" /><circle cx="4.500" cy="16" r="2.300" /><circle cx="15.900" cy="15" r="2.300" /></svg></span>
          <span><svg width="20" height="20" viewBox="0 0 20 20"><rect x="2" y="2.700" width="16" height="15" rx=".8" /><path d="M13 2.500h5v15.400h-5z" fill="#eee" stroke="none" /></svg></span>
          <span class="wallet"><svg width="20" height="20" viewBox="0 0 20 20"><path d="M16.500 6V4.300q0-1.500-1.500-1.500H3.800q-1.500 0-1.500 1.500v11.500q0 1.800 1.800 1.800h11.700q1.800 0 1.800-1.800V6H2.300M17.700 8.800h-5.500q-1.500 0-1.500 1.500v1.500q0 1.500 1.500 1.500h5.500" /></svg></span>
        </div>
        <div class="vpn"><i><b></b></i><span v-fit="29" class="fit">VPN</span></div>
        <svg class="avatar" width="28" height="28" viewBox="0 0 28 28" v-html="orb" />
        <svg class="menu" width="18" height="16" viewBox="0 0 18 16"><path d="M.5 2h17M.5 8h17M.5 14h17" /></svg>
      </div>

      <div class="bookmarks">
        <div v-for="(m, i) in bookmarks" :key="i" class="mark" :style="{ width: m.w + 'px' }">
          <svg width="20" height="20" viewBox="0 0 20 20" v-html="site[m.icon]" />
          <span v-fit="m.fit" class="fit">{{ m.text }}</span>
        </div>
        <span class="more">»</span>
      </div>
    </header>

    <main class="page">
      <div class="blog">
        <div class="blog-head">
          <a class="logo">MyBlog</a>
          <nav><a>Create New Post</a><a>Logout</a></nav>
        </div>
        <input class="field title" type="text" placeholder="Title" />
        <input class="field summary" type="text" placeholder="Summary" />
        <div class="field file"><button type="button">Choose File</button><span>No file chosen</span></div>

        <section class="editor">
          <div v-for="(row, r) in rows" :key="r" class="ed-row">
            <div v-for="(it, i) in row" :key="i" class="cell" :class="{ sep: it.sep, off: it.off }" :style="{ width: it.w + 'px' }">
              <svg v-if="it.icon" width="20" height="20" viewBox="0 0 20 20" v-html="ed[it.icon]" />
            </div>
          </div>
          <div class="canvas">Start writing your post here...</div>
          <div class="status">
            <svg width="12" height="12" viewBox="0 0 20 20" v-html="ed.select" />
            <span v-fit="56" class="fit chars">CHARS: 0</span>
            <span v-fit="62" class="fit words">WORDS: 0</span>
            <span v-fit="121" class="fit">POWERED BY JODIT</span>
          </div>
        </section>

        <button class="submit" type="button">Create Post</button>
      </div>
    </main>

    <footer class="taskbar">
      <svg class="widgets" width="30" height="30" viewBox="0 0 30 30"><rect x=".5" y=".5" width="29" height="29" rx="2" fill="#0d7cc5" /><rect x="3" y="4" width="11" height="22" rx="1" fill="#f3f8fc" /><rect x="16.500" y="4" width="10.500" height="11" rx="1" fill="#5bd0fb" /><rect x="16.500" y="17" width="10.500" height="9" rx="1" fill="#35a5ee" /></svg>
      <svg class="start" width="30" height="30" viewBox="0 0 30 30"><path d="M.5.500h14v14H.5zM15.500.500h14v14h-14zM.5 15.500h14v14H.5zM15.500 15.500h14v14h-14z" fill="url(#win)" /></svg>
      <div class="search">
        <svg width="20" height="20" viewBox="0 0 20 20"><circle cx="8.500" cy="8.500" r="7" fill="#555" stroke="#e4e4e4" stroke-width="2" /><path d="M13.700 13.700l5 5" stroke="#e4e4e4" stroke-width="2.300" /></svg>
        <span v-fit="52" class="fit">Search</span>
      </div>
      <div class="apps">
        <div v-for="(a, i) in apps" :key="i" class="app" :class="{ run: a.run }">
          <svg width="32" height="32" viewBox="0 0 32 32" v-html="a.svg" />
          <svg v-if="a.badge" class="app-badge" width="20" height="20" viewBox="0 0 28 28" v-html="orb" />
        </div>
      </div>
      <div class="tray">
        <svg class="up" width="16" height="10" viewBox="0 0 16 10"><path d="M1.500 8.200L8 1.800l6.500 6.400" stroke-width="2" /></svg>
        <svg class="kbd" width="20" height="16" viewBox="0 0 20 16"><rect x=".8" y="1.300" width="18.400" height="13.400" rx="2" /><path d="M4 5h13M5 8.200h11" stroke-dasharray="1.700 1.700" stroke-width="1.700" /><path d="M5 11.500h10" /></svg>
        <div class="lang"><span v-fit="29" class="fit">ENG</span><span class="fit">IN</span></div>
        <svg class="wifi" width="20" height="16" viewBox="0 0 20 16"><path d="M1 6.500q9-9 18 0M3.800 9.300q6.200-6 12.400 0M6.500 12q3.500-3.400 7 0" /><circle cx="10" cy="13.700" r="1.900" fill="#f4f4f4" stroke="none" /></svg>
        <svg class="vol" width="20" height="18" viewBox="0 0 20 18"><path d="M1 6h3.300L9 2v14l-4.700-4H1zM11.500 6.500q1.800 2.500 0 5M13.800 4.300q3.500 4.700 0 9.400M16 2q5.500 7 0 14" /></svg>
        <svg class="bat2" width="21" height="18" viewBox="0 0 21 18"><path d="M9 5h8q1.500 0 1.500 1.500v7Q18.500 15 17 15H4q-1.500 0-1.500-1.500V10M19.500 8v4" stroke-width="1.500" /><path d="M4.500 1L1 7.500h2.500L2.500 12 7.500 5H5L6.500 1z" fill="#f4f4f4" stroke="none" /><path d="M4 13l3-5v5z" fill="#bbb" stroke="none" /></svg>
        <div class="clock"><span v-fit="35" class="fit">12:33</span><span v-fit="77" class="fit">20-08-2023</span></div>
        <span class="count">1</span>
      </div>
    </footer>
  </div>
</template>

<style>
body { margin: 0; overflow: hidden; }
</style>

<style scoped>
.desktop {
  width: 1920px; height: 1080px; display: flex; flex-direction: column; background: #fff;
  font-family: "Open Sans", "Noto Sans", sans-serif; position: relative; overflow: hidden;
}
.desktop * { box-sizing: border-box; }
svg { display: block; flex: none; overflow: visible; }
.defs { position: absolute; }
.fit { display: inline-block; white-space: pre; flex: none; }

.browser { height: 124px; flex: none; background: #323443; border-bottom: 1px solid #282a35; }
.tabs { height: 38px; display: flex; align-items: center; background: #3e3d44; }
.tab { height: 38px; display: flex; align-items: center; gap: 10px; flex: none; color: #a2a1a6; font-size: 14.5px; border-right: 1px solid #36353b; }
.tab.active { background: #323443; border-radius: 8px 8px 0 0; border-right: 0; color: #d0d0d6; font-weight: 600; }
.tab:has(+ .active) { border-right: 0; }
.tab-text { flex: 1; overflow: hidden; line-height: 24px; }
.tab-text.fade { -webkit-mask-image: linear-gradient(90deg, #000 155px, transparent 186px); mask-image: linear-gradient(90deg, #000 155px, transparent 186px); }
.tab-close { margin-right: 9px; }
.new-tab { margin-left: 19.5px; }
.win-buttons { margin-left: auto; margin-right: 21px; display: flex; gap: 41px; }
.win-buttons svg { fill: none; stroke: #97969b; stroke-width: 1.2; }

.toolbar { height: 44px; display: flex; align-items: center; }
.toolbar svg { fill: none; stroke: #e3e3e8; stroke-width: 1.6; }
.nav-icons, .ext-icons { display: flex; }
.nav-icons { margin-left: 7px; }
.nav-icons span, .ext-icons span { width: 40px; display: flex; justify-content: center; }
.nav-icons .dim svg { stroke: #6a6b78; }
.bookmark { margin-left: 176px; }
.address { margin-left: 18px; width: 1083px; height: 35px; border-radius: 6px; background: #181a21; display: flex; align-items: center; font-size: 16.5px; color: #8c8d92; }
.address .fit { margin-top: -2px; }
.address .info { margin: 0 11px 0 13px; }
.address .host { color: #fff; }
.address svg { stroke: #b4b5b9; stroke-width: 1.5; }
.address .device { margin-left: auto; }
.address .share { margin-left: 20px; }
.divider { width: 1px; height: 20px; background: #77787d; margin: 0 14px 0 14px; }
.shield { stroke: none !important; }
.bat { margin: 0 11px 0 19px; }
.ext-icons { margin-left: 108px; }
.ext-icons .wallet { margin-left: 8px; }
.vpn { margin-left: 15px; width: 74px; height: 32px; border: 1.5px solid #242631; border-radius: 16px; display: flex; align-items: center; padding-left: 13px; gap: 5px; color: #eaeaf0; font-size: 14.5px; }
.vpn .fit { margin-top: -1px; }
.vpn i { width: 12px; height: 12px; border-radius: 6px; background: #9d9fb8; display: flex; align-items: center; justify-content: center; }
.vpn b { width: 7px; height: 1.5px; background: #323443; }
.avatar { margin-left: 10px; stroke: none !important; }
.menu { margin-left: 16.5px; }

.bookmarks { height: 41px; display: flex; align-items: center; padding-left: 18px; color: #fff; font-size: 14.5px; padding-bottom: 3px; }
.mark { display: flex; align-items: center; gap: 10px; flex: none; }
.mark .fit { margin-top: -2px; margin-left: -.5px; }
.more { margin-left: 130px; font-size: 16px; line-height: 20px; margin-top: -3px; }

.page { flex: 1; font-family: "Liberation Sans", Arial, sans-serif; color: #222; }
.blog { width: 1175px; margin-left: 373px; display: flex; flex-direction: column; }
.blog-head { height: 144px; padding: 47px 0 0; display: flex; justify-content: space-between; align-items: flex-start; }
.logo { font-size: 30px; font-weight: bold; line-height: 36px; margin-left: -.5px; }
.blog-head nav { display: flex; gap: 30px; font-size: 20px; line-height: 34px; margin-right: .5px; }
.field { width: 100%; border: 2px solid #ddd; border-radius: 6px; padding: 0 8.5px; font: 16.67px "Liberation Sans", Arial, sans-serif; background: #fff; color: #222; outline: 0; }
.field::placeholder { color: #757575; opacity: 1; }
.title { height: 37px; padding-bottom: 2px; }
.summary { height: 36px; margin-top: 6px; padding-bottom: 1px; }
.file { height: 43px; margin-top: 7px; padding: 0 8px 2px; display: flex; align-items: center; gap: 5px; white-space: nowrap; }
.file button { width: 108px; height: 26px; padding: 0; border: 1px solid #767676; border-radius: 2.5px; background: #efefef; color: #000; font: inherit; line-height: 24px; }

.editor { margin-top: 6px; height: 250px; border: 1px solid #dadada; border-radius: 4px; overflow: hidden; display: flex; flex-direction: column; }
.ed-row { height: 47px; display: flex; align-items: center; background: #f9f9f9; color: #4c4c4c; border-bottom: 1px solid #efefef; }
.ed-row + .ed-row { height: 49px; border-bottom-color: #dadada; }
.cell { height: 43px; display: flex; align-items: center; justify-content: center; flex: none; }
.ed-row:first-child .cell svg { margin-top: 1px; }
.ed-row + .ed-row .cell svg { margin-right: 1px; }
.cell.off { opacity: .3; }
.cell.sep::before { content: ""; width: 1px; height: 43px; background: #dadada; }
.canvas { flex: 1; padding: 27px 9.5px 0; font-size: 20px; line-height: 28px; color: #a2a2a2; }
.status { height: 26px; display: flex; align-items: center; border-top: 1px solid #dadada; background: #f9f9f9; padding: 0 5px 1px; color: #4a4a4a; font: 13.2px "Open Sans", "Noto Sans", sans-serif; }
.status svg { opacity: .9; }
.chars { margin-left: auto; margin-right: 11px; }
.words { margin-right: 10px; }
.submit { margin-top: 6px; height: 38px; border: 0; border-radius: 6px; background: #555; color: #fff; font: 16.67px "Liberation Sans", Arial, sans-serif; padding: 0; line-height: 37px; }

.taskbar { height: 60px; flex: none; background: #1c1c1c; border-top: 1px solid #454a4a; display: flex; align-items: center; color: #fff; padding-bottom: 1px; }
.widgets { margin-left: 13px; }
.start { margin-left: 404px; }
.search { margin-left: 16px; width: 275px; height: 40px; border-radius: 20px; background: #353535; border: 1px solid #3b3b3b; display: flex; align-items: center; gap: 11px; padding-left: 14px; font-size: 17px; color: #d2d2d2; }
.apps { display: flex; margin-left: 3px; }
.app { width: 55px; height: 59px; display: flex; align-items: center; justify-content: center; position: relative; }
.app.run::after { content: ""; position: absolute; left: 23.5px; bottom: 5px; width: 8px; height: 4px; border-radius: 2px; background: #979797; }
.app-badge { position: absolute; left: 29px; top: 8px; }
.tray { display: flex; align-items: center; margin-left: auto; font-size: 15px; line-height: 20px; }
.tray svg { fill: none; stroke: #f4f4f4; stroke-width: 1.4; }
.kbd { margin-left: 22px; }
.lang { width: 29px; margin-left: 23px; display: flex; flex-direction: column; align-items: center; margin-top: -1px; }
.wifi { margin-left: 23px; }
.vol { margin-left: 10px; }
.bat2 { margin-left: 9px; }
.clock { width: 77px; margin-left: 20px; display: flex; flex-direction: column; align-items: flex-end; margin-top: -3px; }
.count { width: 20px; height: 20px; border-radius: 10px; margin: -1px 25px 0 10px; background: #565656; color: #111; font-size: 12.5px; font-weight: 600; text-align: center; }
</style>
